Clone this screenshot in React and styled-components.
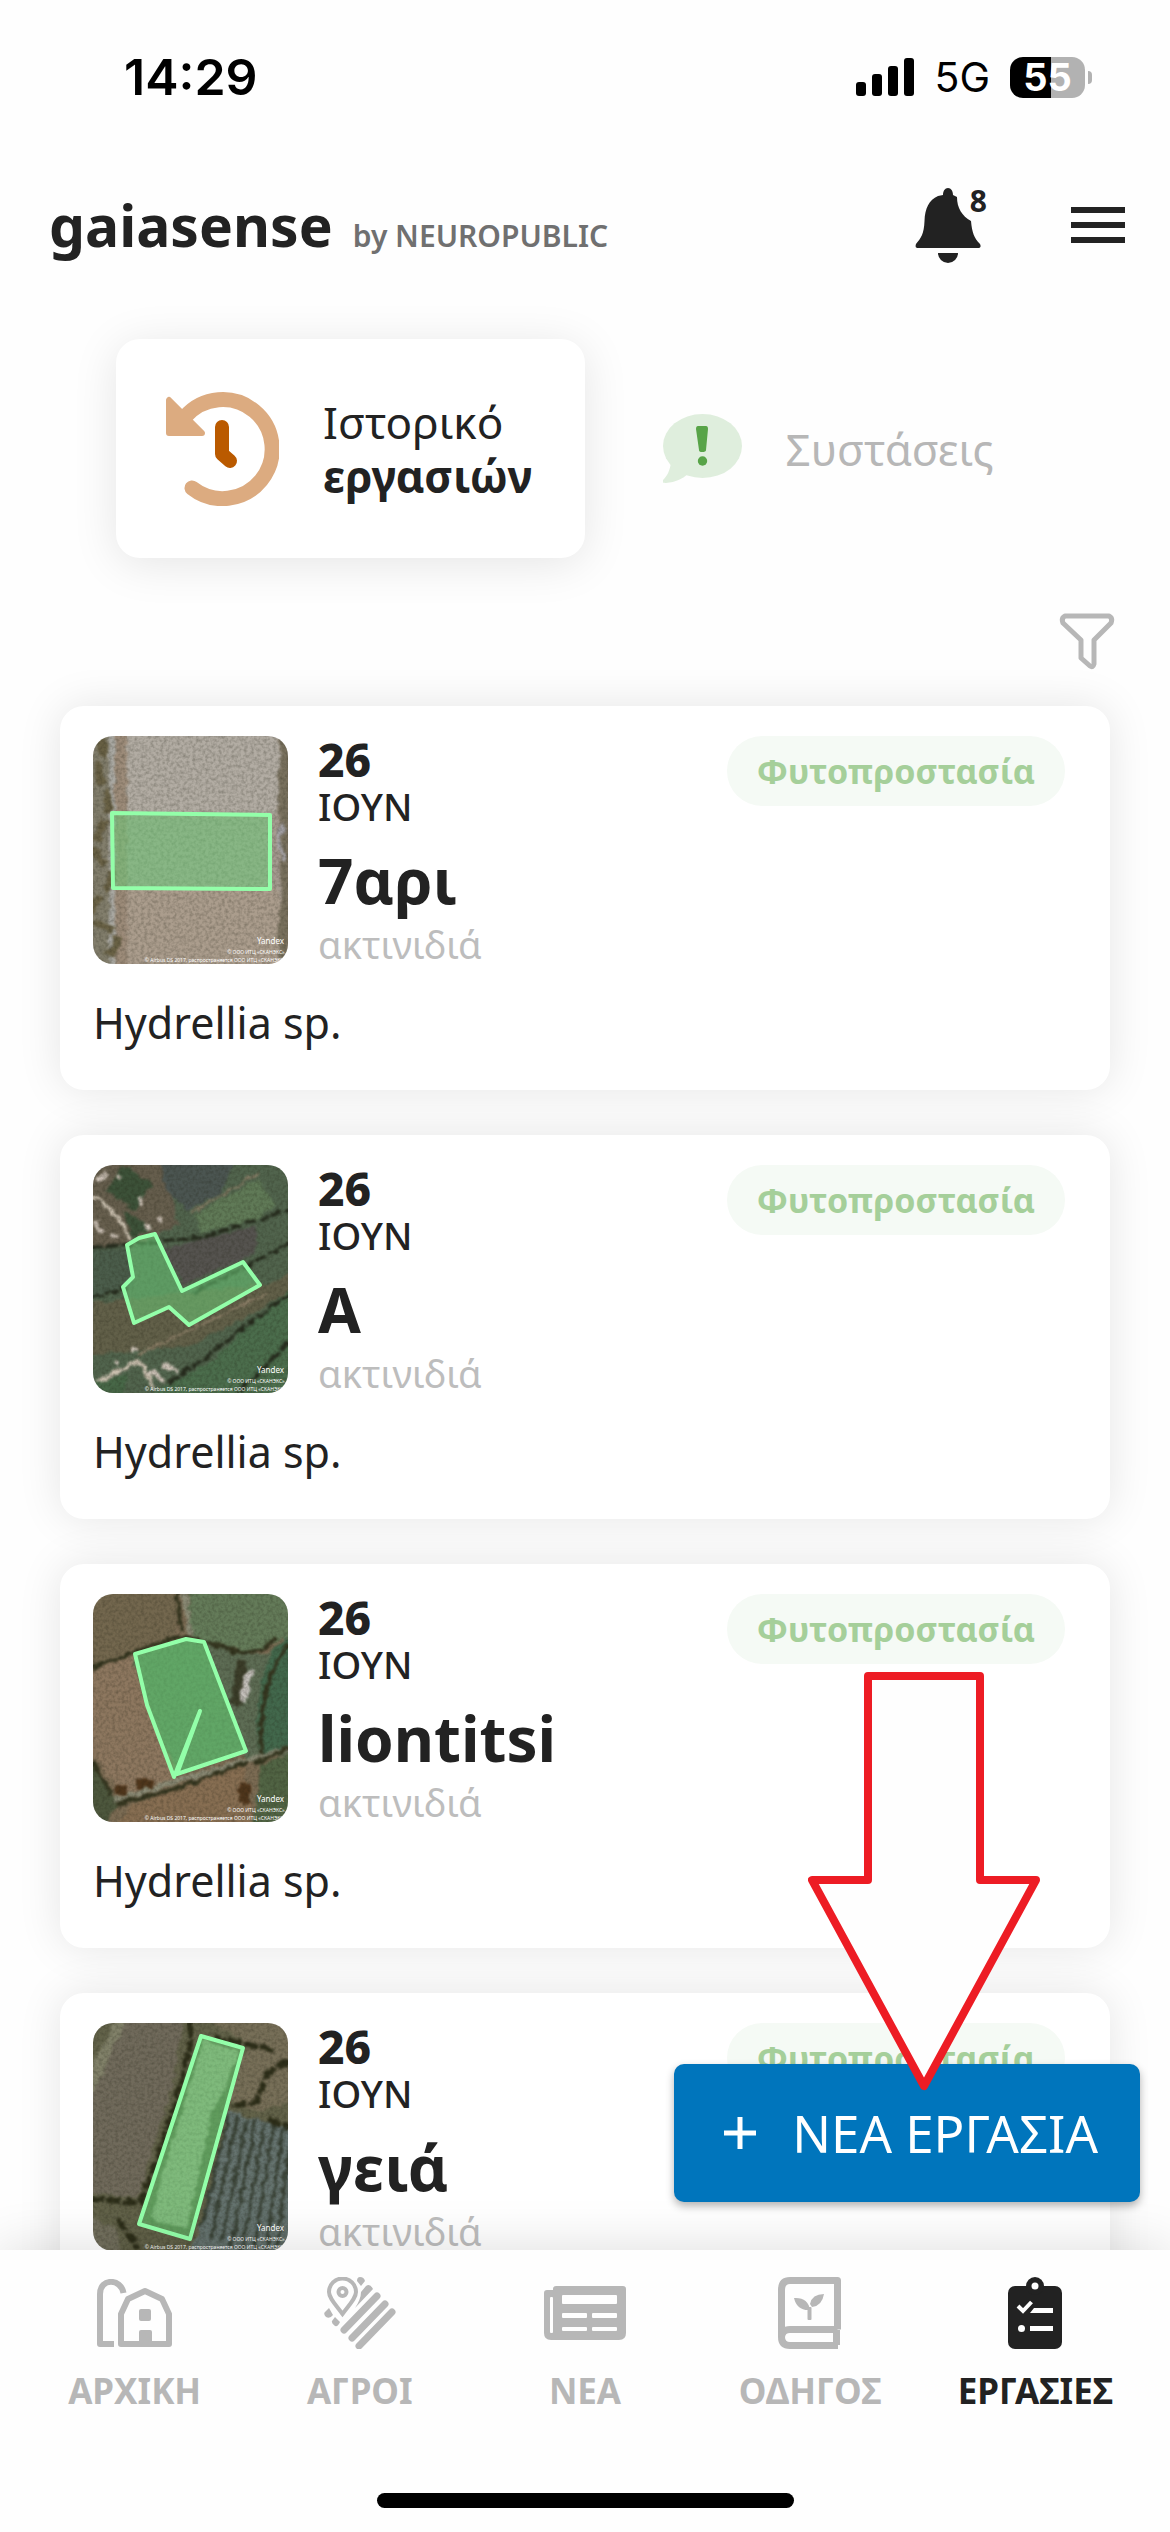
import React from "react";
import styled, { createGlobalStyle } from "styled-components";

const GlobalStyle = createGlobalStyle`
  * {
    box-sizing: border-box;
  }
  body {
    margin: 0;
    background-color: #fefefe;
    color: #222;
    font-family: "Noto Sans", "Open Sans", sans-serif;
  }
  button {
    font-family: inherit;
    color: inherit;
    border: none;
    background: none;
    padding: 0;
    cursor: pointer;
  }
  svg {
    display: block;
    flex-shrink: 0;
  }
`;

const Page = styled.div`
  display: flex;
  flex-direction: column;
  height: 100vh;
  overflow: hidden;
`;

const StatusBar = styled.div`
  display: flex;
  align-items: center;
  justify-content: space-between;
  height: 154px;
  padding: 0 78px 0 124px;
  color: #000;
  font-family: Inter, sans-serif;
`;

const Time = styled.span`
  font-size: 50px;
  font-weight: 600;
`;

const StatusIcons = styled.div`
  display: flex;
  align-items: center;
  gap: 20px;
`;

const Network = styled.span`
  font-size: 41px;
  font-weight: 400;
`;

const BatteryWrap = styled.div`
  display: flex;
  align-items: center;
  gap: 3px;
`;

const Battery = styled.span`
  width: 75px;
  height: 41px;
  border-radius: 13px;
  background: linear-gradient(90deg, #000 55%, #b2b2b2 55%);
  color: #fff;
  font-size: 38px;
  font-weight: 700;
  line-height: 41px;
  text-align: center;
`;

const BatteryTip = styled.span`
  width: 4px;
  height: 13px;
  border-radius: 0 4px 4px 0;
  background-color: #b2b2b2;
`;

const Header = styled.header`
  display: flex;
  align-items: center;
  justify-content: space-between;
  height: 142px;
  padding: 0 45px 0 49px;
`;

const Brand = styled.div`
  display: flex;
  align-items: baseline;
  gap: 20px;
`;

const BrandName = styled.h1`
  margin: 0;
  font-size: 57px;
  line-height: 84px;
  font-weight: 700;
`;

const BrandOwner = styled.span`
  color: #707070;
  font-size: 30px;
  font-weight: 600;
`;

const HeaderActions = styled.div`
  display: flex;
  align-items: center;
  gap: 90px;
`;

const BellButton = styled.button`
  position: relative;
`;

const BellCount = styled.span`
  position: absolute;
  top: -2px;
  right: -6px;
  font-size: 30px;
  line-height: 30px;
  font-weight: 700;
`;

const Tabs = styled.div`
  display: grid;
  grid-template-columns: 1fr 1fr;
  padding: 43px 117px 0 116px;
`;

const Tab = styled.button`
  display: flex;
  align-items: center;
  gap: 44px;
  height: 219px;
  padding-left: ${({ $active }) => ($active ? "49px" : "78px")};
  border-radius: 24px;
  background-color: ${({ $active }) => ($active ? "#fff" : "transparent")};
  box-shadow: ${({ $active }) => ($active ? "0 6px 46px rgba(0, 0, 0, 0.1)" : "none")};
  color: ${({ $active }) => ($active ? "#222" : "#b7b7b7")};
  font-size: 44px;
  line-height: 54px;
  text-align: left;
`;

const TabLabel = styled.span`
  display: flex;
  flex-direction: column;
`;

const FilterRow = styled.div`
  display: flex;
  justify-content: flex-end;
  padding: 55px 55px 0;
`;

const Content = styled.main`
  position: relative;
  flex: 1;
  min-height: 0;
`;

const TaskList = styled.div`
  display: flex;
  flex-direction: column;
  gap: 45px;
  height: 100%;
  padding: 36px 60px 0;
  overflow: hidden;
`;

const Card = styled.article`
  flex-shrink: 0;
  padding: 30px 45px 37px 33px;
  border-radius: 24px;
  background-color: #fff;
  box-shadow: 0 0 44px rgba(0, 0, 0, 0.1);
`;

const CardTop = styled.div`
  display: flex;
  align-items: flex-start;
`;

const Thumb = styled.svg`
  width: 195px;
  height: 228px;
  border-radius: 20px;
`;

const Info = styled.div`
  display: flex;
  flex-direction: column;
  flex: 1;
  padding-left: 30px;
`;

const Day = styled.span`
  font-size: 46px;
  line-height: 46px;
  font-weight: 800;
`;

const Month = styled.span`
  font-size: 38px;
  line-height: 48px;
  font-weight: 500;
`;

const FieldName = styled.h2`
  margin: 6px 0 0;
  font-size: 62px;
  line-height: 88px;
  font-weight: 700;
`;

const Crop = styled.span`
  color: #bdbdbd;
  font-size: 38px;
  line-height: 40px;
`;

const Tag = styled.span`
  padding: 0 30px;
  border-radius: 36px;
  background-color: #f5faf5;
  color: #a5cf9a;
  font-size: 34px;
  line-height: 70px;
  font-weight: 700;
`;

const Note = styled.p`
  margin: 29px 0 0;
  font-size: 43px;
  line-height: 60px;
`;

const NewTask = styled.button`
  position: absolute;
  right: 30px;
  bottom: 48px;
  display: flex;
  align-items: center;
  gap: 36px;
  height: 138px;
  padding: 0 42px 0 50px;
  border-radius: 10px;
  background-color: #0075bc;
  box-shadow: 0 4px 8px rgba(0, 0, 0, 0.3);
  color: #fff;
  font-size: 51px;
  white-space: nowrap;
`;

const Pointer = styled.svg`
  position: absolute;
  right: 130px;
  bottom: 159px;
`;

const BottomBar = styled.footer`
  position: relative;
  height: 282px;
  background-color: #fefefe;
  box-shadow: 0 0 50px rgba(0, 0, 0, 0.14);
`;

const Nav = styled.nav`
  display: grid;
  grid-template-columns: repeat(5, 1fr);
  height: 243px;
  padding: 26px 22px 0;
`;

const NavItem = styled.a`
  display: flex;
  flex-direction: column;
  align-items: center;
  gap: 16px;
  color: ${({ $active }) => ($active ? "#222" : "#b7b7b7")};
  font-size: 35px;
  line-height: 50px;
  font-weight: 700;
  text-decoration: none;
`;

const NavIcon = styled.span`
  display: flex;
  align-items: center;
  height: 74px;
`;

const HomeIndicator = styled.div`
  width: 417px;
  height: 15px;
  margin: 0 auto;
  border-radius: 8px;
  background-color: #000;
`;

const SignalIcon = () => (
  <svg width="58" height="38" viewBox="0 0 58 38">
    <rect x="0" y="24" width="10" height="14" rx="3" />
    <rect x="16" y="16" width="10" height="22" rx="3" />
    <rect x="32" y="8" width="10" height="30" rx="3" />
    <rect x="48" y="0" width="10" height="38" rx="3" />
  </svg>
);

const BellIcon = () => (
  <svg width="66" height="75" viewBox="0 0 66 75" fill="#222">
    <path d="M33 0C30 0 28 3 28 7L23 8C14 12 10 20 9.500 33C9 46 6 50 1 56C0 59 1 60 3 60H63C66 60 66 58 65 56C59 50 57 44 56 33C47 28 42 20 42 9L38 7C38 3 36 0 33 0Z" />
    <path d="M23 65H43A10 10 0 0 1 23 65Z" />
  </svg>
);

const MenuIcon = () => (
  <svg width="54" height="36" viewBox="0 0 54 36" fill="#222">
    <rect width="54" height="6" />
    <rect y="15" width="54" height="6" />
    <rect y="30" width="54" height="6" />
  </svg>
);

const HistoryIcon = () => (
  <svg width="114" height="114" viewBox="0 0 114 114" fill="none" strokeLinecap="round" strokeLinejoin="round">
    <path d="M20 25A49.500 49.500 0 1 1 27 96" stroke="#dcab80" strokeWidth="15" />
    <path d="M4 8V41H37Z" fill="#dcab80" stroke="#dcab80" strokeWidth="6" />
    <path d="M57 35V62L65 69" stroke="#ba5a00" strokeWidth="14" />
  </svg>
);

const AdviceIcon = () => (
  <svg width="79" height="70" viewBox="0 0 79 70">
    <ellipse cx="39.5" cy="32" rx="39.5" ry="32" fill="#dfeedd" />
    <path d="M8 48C7 57 4 62 0 66C-1 69 1 69 3 69C13 68 19 65 25 60Z" fill="#dfeedd" />
    <path d="M35 12H43Q45 12 45 15L43 36Q43 38 39 38Q36 38 36 36L33 15Q33 12 35 12Z" fill="#58a448" />
    <circle cx="39.5" cy="47" r="4.7" fill="#58a448" />
  </svg>
);

const FilterIcon = () => (
  <svg width="56" height="57" viewBox="0 0 56 57" fill="none" stroke="#b7b7b7" strokeWidth="5" strokeLinejoin="round">
    <path d="M6 3H50Q54 5 52 10L35 27V51Q34 55 31 53L22 45V27L4 10Q2 5 6 3Z" />
  </svg>
);

const PlusIcon = () => (
  <svg width="32" height="32" viewBox="0 0 32 32" stroke="#fff" strokeWidth="5">
    <path d="M0 16H32M16 0V32" />
  </svg>
);

const FarmIcon = () => (
  <svg width="76" height="68" viewBox="0 0 76 68" fill="none" stroke="currentColor" strokeWidth="6" strokeLinejoin="round">
    <path d="M17 65H3V15C3 -1 24 -1 26.500 14" />
    <path d="M24 65V35L31 20L48 12L65 20L72 35V65Z" />
    <rect x="42" y="30" width="12" height="12" rx="2" fill="currentColor" stroke="none" />
    <rect x="42" y="51" width="13" height="14" rx="2" fill="currentColor" stroke="none" />
  </svg>
);

const FieldsIcon = () => (
  <svg width="72" height="72" viewBox="0 0 72 72" fill="none" stroke="currentColor" strokeLinecap="round">
    <path d="M18.500 37C11 27 5 21 5 15A13.500 13.500 0 0 1 32 15C32 21 26 27 18.500 37Z" strokeWidth="4" />
    <circle cx="18.5" cy="15" r="4" strokeWidth="4" />
    <path d="M53 19L20 53M61 27L28 61M68 35L35 69" strokeWidth="7" />
    <path d="M42 9Q46 6 49 12L31 31Q37 22 37 15Z" fill="currentColor" stroke="none" />
    <path d="M36 0Q40 0 41 4L37 9L33 4Q33 0 36 0M5 31L9 38Q6 42 2 40Q-1 37 1 35ZM11 40L16 45Q14 50 11 49Q7 46 8 44Z" fill="currentColor" stroke="none" />
  </svg>
);

const NewsIcon = () => (
  <svg width="82" height="54" viewBox="0 0 82 54">
    <path d="M12 0H79Q82 0 82 3V47Q82 54 75 54H7Q0 54 0 47V7Q0 4 3 4H9V3Q9 0 12 0Z" fill="currentColor" />
    <g fill="#fefefe">
      <rect x="6" y="11" width="3" height="36" rx="1" />
      <rect x="18" y="9" width="55" height="9" rx="1" />
      <rect x="18" y="27" width="25" height="5" rx="1" />
      <rect x="48" y="27" width="25" height="5" rx="1" />
      <rect x="18" y="41" width="25" height="4" rx="1" />
      <rect x="48" y="41" width="25" height="4" rx="1" />
    </g>
  </svg>
);

const GuideIcon = () => (
  <svg width="64" height="72" viewBox="0 0 64 72" fill="none" stroke="currentColor" strokeWidth="7" strokeLinejoin="round">
    <path d="M59.500 52.500V3.500H12Q3.500 3.500 3.500 13V60Q3.500 68.500 12 68.500H60" />
    <path d="M3.500 60Q4 52.500 12 52.500H59.500M58.500 53V68" />
    <g fill="currentColor" stroke="none">
      <path d="M16 21Q30 20 32 33Q19 34 16 21ZM46 17Q34 17 32 27L34 30Q44 29 46 17Z" />
      <rect x="29.500" y="30" width="4" height="13" rx="1" />
    </g>
  </svg>
);

const TasksIcon = () => (
  <svg width="54" height="72" viewBox="0 0 54 72">
    <rect y="9" width="54" height="63" rx="7" fill="currentColor" />
    <circle cx="27" cy="9" r="9" fill="currentColor" />
    <circle cx="27" cy="9" r="3.5" fill="#fefefe" />
    <path d="M10 29L15 34L23.500 25" fill="none" stroke="#fefefe" strokeWidth="4" />
    <path d="M26 31H45V36H22ZM22 49H45V54H22Z" fill="#fefefe" />
    <circle cx="13.5" cy="51.500" r="3.5" fill="#fefefe" />
  </svg>
);

const DryField = () => (
  <>
    <rect width="195" height="228" fill="#a59b90" />
    <rect x="30" width="155" height="76" fill="#b2aca3" />
    <rect x="22" y="153" width="164" height="75" fill="#ab9d8d" />
    <rect x="22" width="12" height="228" fill="#9c8b79" />
    <rect width="17" height="228" fill="#827e6c" />
    <rect x="16" width="6" height="228" fill="#a9a8a2" />
    <path d="M6 0Q14 14 8 26T11 52T8 92T12 128T7 160T12 190T8 228" fill="none" stroke="#686044" strokeWidth="8" strokeDasharray="22 7" />
    <path d="M186 0H195V228H188L184 190L188 160L185 60Z" fill="#79715e" />
    <path d="M190 88L186 105L191 125" fill="none" stroke="#a5a3a8" strokeWidth="4" />
  </>
);

const VillageField = () => (
  <>
    <rect width="195" height="228" fill="#51644d" />
    <path d="M0 0H70L85 60L40 82L0 80Z" fill="#665e4d" />
    <path d="M68 0H140L128 28L95 45L72 25Z" fill="#4b5551" />
    <path d="M102 50L165 14L182 40L160 55L108 68Z" fill="#607a57" />
    <path d="M70 84L165 60L160 90L90 120Z" fill="#55534f" />
    <path d="M0 86L36 84L40 120L0 132Z" fill="#4b5d4b" />
    <path d="M0 138L180 118L195 108V128L100 180L0 190Z" fill="#626049" />
    <path d="M60 228L120 195L195 125V228Z" fill="#4b6d4c" />
    <path d="M30 0L60 18L42 45L12 26ZM30 45L60 62L40 74Z" fill="#3c5138" />
    <path d="M0 82L35 80L110 72L195 45M0 132L35 124M100 128L160 98L195 78M75 218L105 198L195 130M195 178L170 204L145 228" fill="none" stroke="#262c1e" strokeWidth="4" strokeDasharray="12 2" />
    <path d="M0 32Q25 46 36 74M4 217L43 198L50 200L61 222" fill="none" stroke="#c9bfae" strokeWidth="4" />
    <path d="M98 48L166 8M45 190L175 128" fill="none" stroke="#8d7f68" strokeWidth="2" />
    <path d="M4 16L14 8M24 12L30 14M46 32L50 40M52 62H58M64 54H70M3 56L9 68M18 72L24 70M20 196L26 199M38 184H44M56 206L72 216M70 200L86 206" stroke="#cec3b8" strokeWidth="5" />
    <path d="M0 228V219L36 208L30 228Z" fill="#476747" />
  </>
);

const RiverField = () => (
  <>
    <rect width="195" height="228" fill="#7b6b53" />
    <path d="M0 0H86L82 42L0 72Z" fill="#73674e" />
    <path d="M95 0H195V45L150 58L98 42Z" fill="#647b59" />
    <path d="M110 46L150 60H195V160L155 165Z" fill="#5d6c54" />
    <path d="M180 55L195 45V155L166 160Q160 100 180 55Z" fill="#42684c" />
    <path d="M0 76L40 62L54 112L80 184L30 204L0 160Z" fill="#8d775f" />
    <path d="M40 62L93 45L111 48L153 157L84 180L54 111Z" fill="#567a52" />
    <path d="M40 210L150 170L160 228H25Z" fill="#876e52" />
    <path d="M168 170L195 160V228H160Z" fill="#516444" />
    <path d="M0 168L24 210L14 228H0Z" fill="#4d573d" />
    <path d="M91 0L98 42M20 207L80 188L195 155" fill="none" stroke="#8b8b76" strokeWidth="5" />
    <path d="M0 73L85 43Q130 50 140 58Q170 60 182 44M195 50Q165 90 168 160M24 210L85 194L155 168M85 0L88 36M160 170L195 154M0 168L18 200" fill="none" stroke="#34351f" strokeWidth="4" />
    <path d="M22 196H34M45 190H60M152 190V208" stroke="#4e351b" strokeWidth="10" />
    <path d="M149 66L143 110" stroke="#3b3d29" strokeWidth="10" />
    <path d="M156 76L150 108" stroke="#c4c0bb" strokeWidth="7" />
  </>
);

const RowsField = () => (
  <>
    <rect width="195" height="228" fill="#626249" />
    <path d="M30 0H90L80 60L45 175L0 170V60Z" fill="#706a5b" />
    <path d="M0 40L22 0H32L0 70Z" fill="#818169" />
    <path d="M120 0H195V80L160 90L135 75L155 20Z" fill="#776f58" />
    <path d="M195 105L135 88L112 190L98 228H195Z" fill="#65736f" />
    <path d="M136 92L108 205M145 93L118 215M154 95L128 220M163 97L138 224M172 99L149 228M181 101L161 228M190 104L173 228M195 130L184 228" stroke="#3b4438" strokeWidth="3.500" />
    <path d="M97 0L98 18L80 90L48 180L0 176M120 14L182 28M195 38L175 50L163 80L138 82M175 95L195 105M25 195L45 225" fill="none" stroke="#2d2e19" strokeWidth="6" strokeDasharray="14 2" />
    <path d="M0 195L22 205L30 228H0Z" fill="#73705e" />
    <path d="M106 16L148 27L97 214L50 198Z" fill="#54653f" />
    <path d="M110 18L147 28L130 72L120 84L94 204L66 200L58 192Z" fill="#93a27e" />
  </>
);

const tasks = [
  { day: "26", month: "ΙΟΥΝ", field: "7αρι", crop: "ακτινιδιά", tag: "Φυτοπροστασία", note: "Hydrellia sp.", ground: <DryField />, shape: "M19 77L177 79V153L20 152Z" },
  { day: "26", month: "ΙΟΥΝ", field: "Α", crop: "ακτινιδιά", tag: "Φυτοπροστασία", note: "Hydrellia sp.", ground: <VillageField />, shape: "M62 69L89 126L150 97L167 120L96 160L76 142L41 158L30 122L40 112L34 80L46 73Z" },
  { day: "26", month: "ΙΟΥΝ", field: "liontitsi", crop: "ακτινιδιά", tag: "Φυτοπροστασία", note: "Hydrellia sp.", ground: <RiverField />, shape: "M93 45L111 48L153 157L84 180L107 117L81 183L54 111L42 60Z" },
  { day: "26", month: "ΙΟΥΝ", field: "γειά", crop: "ακτινιδιά", tag: "Φυτοπροστασία", note: "Hydrellia sp.", ground: <RowsField />, shape: "M108 13L150 25L97 216L46 201Z" },
];

const navItems = [
  { label: "ΑΡΧΙΚΗ", icon: <FarmIcon /> },
  { label: "ΑΓΡΟΙ", icon: <FieldsIcon /> },
  { label: "ΝΕΑ", icon: <NewsIcon /> },
  { label: "ΟΔΗΓΟΣ", icon: <GuideIcon /> },
  { label: "ΕΡΓΑΣΙΕΣ", icon: <TasksIcon />, active: true },
];

const FieldThumb = ({ id, ground, shape }) => (
  <Thumb viewBox="0 0 195 228">
    <defs>
      {/* uneven edges and speckle for the aerial ground */}
      <filter id={`rough-${id}`} x="0" y="0" width="100%" height="100%" colorInterpolationFilters="sRGB">
        <feTurbulence type="fractalNoise" baseFrequency="0.12" numOctaves="3" seed={id + 3} result="n" />
        <feDisplacementMap in="SourceGraphic" in2="n" scale="8" xChannelSelector="R" yChannelSelector="G" />
        <feGaussianBlur stdDeviation="0.8" result="d" />
        <feTurbulence type="fractalNoise" baseFrequency="0.31" numOctaves="2" seed={id + 8} />
        <feColorMatrix values="0 0 0 0 0.1  0 0 0 0 0.1  0 0 0 0 0.05  0.5 0 0 0 -0.18" result="g" />
        <feMerge>
          <feMergeNode in="SourceGraphic" />
          <feMergeNode in="d" />
          <feMergeNode in="g" />
        </feMerge>
      </filter>
    </defs>
    <g filter={`url(#rough-${id})`}>{ground}</g>
    <path d={shape} fill="#6cd27a" fillOpacity="0.5" stroke="#93ffa9" strokeWidth="4" strokeLinejoin="round" />
    <g fill="#fff" fontFamily="Noto Sans, sans-serif" textAnchor="end">
      <text x="191" y="208" fontSize="8">Yandex</text>
      <text x="193" y="218" fontSize="5">© ООО ИТЦ «СКАНЭКС»,</text>
      <text x="193" y="226" fontSize="5">© Airbus DS 2017, распространяется ООО ИТЦ «СКАНЭКС»</text>
    </g>
  </Thumb>
);

const TaskCard = ({ id, task }) => (
  <Card>
    <CardTop>
      <FieldThumb id={id} ground={task.ground} shape={task.shape} />
      <Info>
        <Day>{task.day}</Day>
        <Month>{task.month}</Month>
        <FieldName>{task.field}</FieldName>
        <Crop>{task.crop}</Crop>
      </Info>
      <Tag>{task.tag}</Tag>
    </CardTop>
    <Note>{task.note}</Note>
  </Card>
);

const App = () => {
  return (
    <>
      <GlobalStyle />
      <Page>
        <StatusBar>
          <Time>14:29</Time>
          <StatusIcons>
            <SignalIcon />
            <Network>5G</Network>
            <BatteryWrap>
              <Battery>55</Battery>
              <BatteryTip />
            </BatteryWrap>
          </StatusIcons>
        </StatusBar>
        <Header>
          <Brand>
            <BrandName>gaiasense</BrandName>
            <BrandOwner>by NEUROPUBLIC</BrandOwner>
          </Brand>
          <HeaderActions>
            <BellButton aria-label="Ειδοποιήσεις">
              <BellIcon />
              <BellCount>8</BellCount>
            </BellButton>
            <button aria-label="Μενού">
              <MenuIcon />
            </button>
          </HeaderActions>
        </Header>
        <Tabs>
          <Tab $active>
            <HistoryIcon />
            <TabLabel>
              <span>Ιστορικό</span>
              <b>εργασιών</b>
            </TabLabel>
          </Tab>
          <Tab>
            <AdviceIcon />
            <TabLabel>Συστάσεις</TabLabel>
          </Tab>
        </Tabs>
        <FilterRow>
          <button aria-label="Φίλτρα">
            <FilterIcon />
          </button>
        </FilterRow>
        <Content>
          <TaskList>
            {tasks.map((task, i) => (
              <TaskCard key={task.field} id={i} task={task} />
            ))}
          </TaskList>
          <NewTask>
            <PlusIcon />
            ΝΕΑ ΕΡΓΑΣΙΑ
          </NewTask>
          <Pointer width="232" height="419" viewBox="0 0 232 419">
            <path d="M60 4H172V208H228L116 414L4 208H60Z" fill="#fefefe" stroke="#ed1c24" strokeWidth="8" strokeLinejoin="round" />
          </Pointer>
        </Content>
        <BottomBar>
          <Nav>
            {navItems.map((item) => (
              <NavItem key={item.label} href="#" $active={item.active}>
                <NavIcon>{item.icon}</NavIcon>
                {item.label}
              </NavItem>
            ))}
          </Nav>
          <HomeIndicator />
        </BottomBar>
      </Page>
    </>
  );
};

export default App;
